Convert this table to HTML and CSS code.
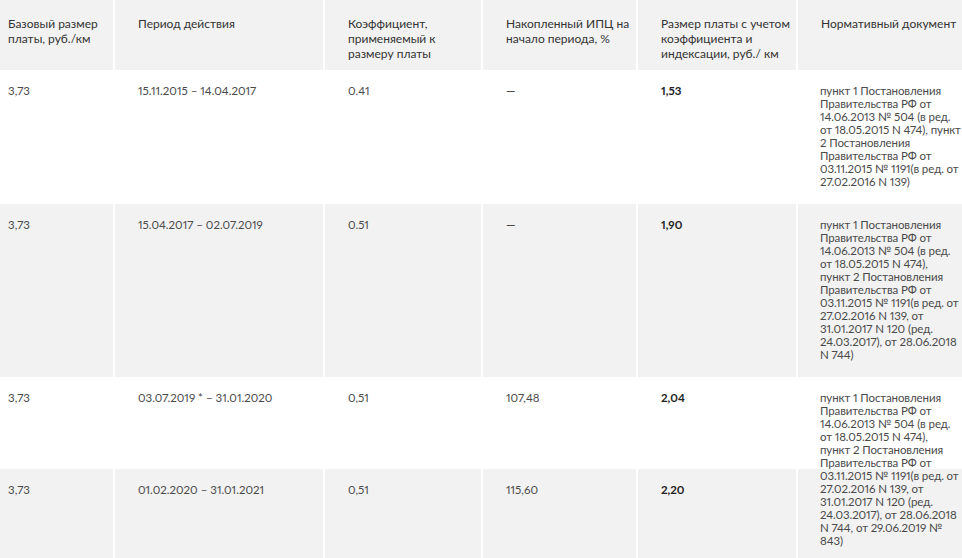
FILE: index.html
```html
<!DOCTYPE html>
<html lang="ru">
<head>
<meta charset="utf-8">
<link rel="stylesheet" href="styles.css">
</head>
<body>
<div class="table">
  <div class="row head">
    <div class="cell first">Базовый размер платы, руб./км</div>
    <div class="cell">Период действия</div>
    <div class="cell">Коэффициент, применяемый к размеру платы</div>
    <div class="cell">Накопленный ИПЦ на начало периода, %</div>
    <div class="cell">Размер платы с учетом коэффициента и индексации, руб./ км</div>
    <div class="cell">Нормативный документ</div>
  </div>
  <div class="row body white r1">
    <div class="cell first">3,73</div>
    <div class="cell">15.11.2015 – 14.04.2017</div>
    <div class="cell">0.41</div>
    <div class="cell"><span class="dash">—</span></div>
    <div class="cell"><b>1,53</b></div>
    <div class="cell">пункт 1 Постановления Правительства РФ от 14.06.2013 № 504 (в ред. от 18.05.2015 N 474), пункт 2 Постановления Правительства РФ от 03.11.2015 № 1191(в ред. от 27.02.2016 N 139)</div>
  </div>
  <div class="row body gray r2">
    <div class="cell first">3,73</div>
    <div class="cell">15.04.2017 – 02.07.2019</div>
    <div class="cell">0.51</div>
    <div class="cell"><span class="dash">—</span></div>
    <div class="cell"><b>1,90</b></div>
    <div class="cell">пункт 1 Постановления Правительства РФ от 14.06.2013 № 504 (в ред. от 18.05.2015 N 474), пункт&nbsp;2 Постановления Правительства РФ от 03.11.2015 № 1191(в ред. от 27.02.2016 N 139, от 31.01.2017 N 120 (ред. 24.03.2017), от 28.06.2018 N 744)</div>
  </div>
  <div class="row body white r3">
    <div class="cell first">3,73</div>
    <div class="cell">03.07.2019 * – 31.01.2020</div>
    <div class="cell">0,51</div>
    <div class="cell">107,48</div>
    <div class="cell"><b>2,04</b></div>
    <div class="cell over">пункт 1 Постановления Правительства РФ от 14.06.2013 № 504 (в ред. от 18.05.2015 N 474), пункт&nbsp;2 Постановления Правительства РФ от 03.11.2015 № 1191(в ред. от 27.02.2016 N 139, от 31.01.2017 N 120 (ред. 24.03.2017), от 28.06.2018 N 744, от 29.06.2019 № 843)</div>
  </div>
  <div class="row body gray r4">
    <div class="cell first">3,73</div>
    <div class="cell">01.02.2020 – 31.01.2021</div>
    <div class="cell">0,51</div>
    <div class="cell">115,60</div>
    <div class="cell"><b>2,20</b></div>
    <div class="cell"></div>
  </div>
</div>
</body>
</html>
```
FILE: styles.css
```css
html, body {
  margin: 0;
  padding: 0;
  background: #fff;
}
body {
  font-family: "Lato", "Noto Sans", sans-serif;
  font-variant-numeric: proportional-nums;
  color: #3a3a3a;
  width: 962px;
  height: 558px;
  overflow: hidden;
}
.table {
  display: flex;
  flex-direction: column;
  background: #fff;
}
.row {
  display: grid;
  grid-template-columns: 113px 208px 156px 153px 158px 164px;
  column-gap: 2px;
}
.cell {
  padding: 14px 2px 16px 23px;
  box-sizing: border-box;
}
.cell.first {
  padding-left: 8px;
}
.head .cell {
  background: #f2f2f2;
  font-size: 12px;
  line-height: 15px;
  color: #333;
  padding-top: 16px;
  padding-bottom: 9px;
  height: 70px;
}
.body .cell {
  font-size: 11.5px;
  line-height: 13px;
  color: #4a4a4a;
}
.body .cell:last-child {
  padding-left: 22px;
  padding-right: 0;
  letter-spacing: -0.1px;
}
.gray .cell {
  background: #f2f2f2;
}
.white .cell {
  background: #fff;
}
.r1 .cell { height: 134px; }
.r2 .cell { height: 173px; }
.r3 .cell { height: 92px; }
.r4 .cell { height: 100px; }
.over {
  position: relative;
  z-index: 1;
}
b {
  font-weight: 700;
  color: #222;
}
.dash {
  color: #222;
  font-size: 12px;
}
```
